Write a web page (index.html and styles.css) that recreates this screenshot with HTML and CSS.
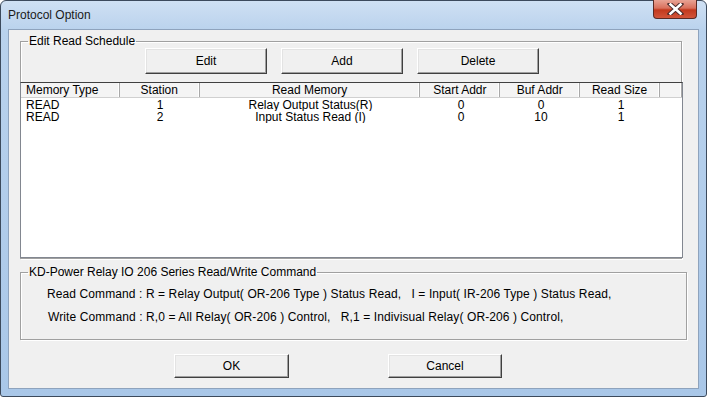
FILE: index.html
```html
<!DOCTYPE html>
<html lang="en">
<head>
    <meta charset="utf-8">
    <title>Protocol Option</title>
    <link rel="stylesheet" href="styles.css">
</head>
<body>
    <div class="window">
        <div class="titlebar">
            <span class="title">Protocol Option</span>
            <div class="close-btn">
                <svg width="17" height="12" viewBox="0 0 17 12">
                    <path d="M3 1 L14 11 M14 1 L3 11" stroke="#4a2a2a" stroke-width="4.5" stroke-linecap="square"/>
                    <path d="M3.5 1.5 L13.5 10.5 M13.5 1.5 L3.5 10.5" stroke="#ffffff" stroke-width="2.6" stroke-linecap="square"/>
                </svg>
            </div>
        </div>

        <div class="client">
            <fieldset class="group schedule">
                <legend>Edit Read Schedule</legend>
                <div class="action-row">
                    <button class="btn action-btn">Edit</button>
                    <button class="btn action-btn">Add</button>
                    <button class="btn action-btn">Delete</button>
                </div>
                <div class="list-view">
                    <div class="list-header">
                        <div class="col col-type left">Memory Type</div>
                        <div class="col col-station">Station</div>
                        <div class="col col-memory">Read Memory</div>
                        <div class="col col-start">Start Addr</div>
                        <div class="col col-buf">Buf Addr</div>
                        <div class="col col-size">Read Size</div>
                        <div class="col col-rest"></div>
                    </div>
                    <div class="list-row">
                        <div class="col col-type left">READ</div>
                        <div class="col col-station">1</div>
                        <div class="col col-memory">Relay Output Status(R)</div>
                        <div class="col col-start">0</div>
                        <div class="col col-buf">0</div>
                        <div class="col col-size">1</div>
                    </div>
                    <div class="list-row">
                        <div class="col col-type left">READ</div>
                        <div class="col col-station">2</div>
                        <div class="col col-memory">Input Status Read (I)</div>
                        <div class="col col-start">0</div>
                        <div class="col col-buf">10</div>
                        <div class="col col-size">1</div>
                    </div>
                </div>
            </fieldset>

            <fieldset class="group command">
                <legend>KD-Power Relay IO 206 Series Read/Write Command</legend>
                <p class="cmd-line">Read Command : R = Relay Output( OR-206 Type ) Status Read, &nbsp; I = Input( IR-206 Type ) Status Read,</p>
                <p class="cmd-line write">Write Command : R,0 = All Relay( OR-206 ) Control, &nbsp; R,1 = Indivisual Relay( OR-206 ) Control,</p>
            </fieldset>

            <div class="dialog-buttons">
                <button class="btn ok-btn">OK</button>
                <button class="btn cancel-btn">Cancel</button>
            </div>
        </div>
    </div>
</body>
</html>
```

FILE: styles.css
```css
:root {
    --frame-dark: #3c4a5c;
    --client-bg: #f0f0f0;
    --text: #000000;
    --group-line: #a0a0a0;
    --list-border: #828790;
    --font-ui: "Liberation Sans", Arial, sans-serif;
}

* {
    box-sizing: border-box;
}

body {
    margin: 0;
    width: 707px;
    height: 397px;
    overflow: hidden;
    background: #ffffff;
    font-family: var(--font-ui);
    font-size: 12px;
    color: var(--text);
}

.window {
    width: 707px;
    height: 397px;
    display: flex;
    flex-direction: column;
    border: 1px solid var(--frame-dark);
    border-radius: 6px 6px 3px 3px;
    background: linear-gradient(180deg, #cfe0f3 0%, #b9d2ed 30px, #a9c7e8 100%);
    padding: 0 7px 7px 7px;
}

.titlebar {
    height: 28px;
    display: flex;
    justify-content: space-between;
    align-items: flex-start;
    flex-shrink: 0;
}

.title {
    margin-top: 7px;
    font-size: 12px;
    color: #1a1a1a;
}

.close-btn {
    width: 44px;
    height: 19px;
    margin-top: -1px;
    margin-right: 2px;
    border: 1px solid #5a2a24;
    border-top: none;
    border-radius: 0 0 4px 4px;
    background: linear-gradient(180deg, #e8a394 0%, #d9705c 45%, #c2391d 55%, #d2543a 100%);
    display: flex;
    align-items: center;
    justify-content: center;
}

.client {
    flex: 1;
    background: var(--client-bg);
    border: 1px solid #8ea3bd;
    padding: 4px 0 0 11px;
    display: flex;
    flex-direction: column;
}

.group {
    margin: 0;
    padding: 0;
    border: 1px solid var(--group-line);
    box-shadow: inset 1px 1px 0 #ffffff, 1px 1px 0 #ffffff;
    min-width: 0;
}

.group legend {
    margin-left: 7px;
    padding: 0 1px;
    line-height: 14px;
    font-size: 12px;
}

.schedule {
    width: 662px;
    height: 225px;
}

.action-row {
    display: flex;
    gap: 14px;
    margin: 0 0 0 124px;
}

.btn {
    font-family: var(--font-ui);
    font-size: 12px;
    color: var(--text);
    background: #f0f0f0;
    border: 1px solid;
    border-color: #ffffff #404040 #404040 #ffffff;
    box-shadow: inset -1px -1px 0 #a0a0a0, inset 1px 1px 0 #e3e3e3;
    padding: 0;
}

.action-btn {
    width: 122px;
    height: 26px;
}

.list-view {
    width: 663px;
    height: 176px;
    margin: 8px 0 0 -1px;
    background: #ffffff;
    border: 1px solid var(--list-border);
    border-top-color: #404040;
}

.list-header {
    display: flex;
    height: 15px;
    background: #f4f4f4;
    border-bottom: 1px solid #d0d0d0;
}

.list-header .col {
    line-height: 14px;
    border-right: 1px solid #a9a9a9;
    box-shadow: inset -1px 0 0 #ffffff;
}

.list-row {
    display: flex;
    height: 12px;
    margin-top: 1px;
}

.list-row + .list-row {
    margin-top: 0;
}

.list-row .col {
    line-height: 12px;
}

.col {
    text-align: center;
    white-space: nowrap;
    overflow: hidden;
}

.col.left {
    text-align: left;
    padding-left: 5px;
}

.col-type { width: 99px; }
.col-station { width: 80px; }
.col-memory { width: 221px; }
.col-start { width: 80px; }
.col-buf { width: 80px; }
.col-size { width: 80px; }
.col-rest { width: 22px; }

.command {
    width: 667px;
    height: 75px;
    margin-top: 6px;
}

.cmd-line {
    margin: 7px 0 0 26px;
    line-height: 16px;
    letter-spacing: 0.1px;
}

.cmd-line.write {
    margin-top: 7px;
    margin-left: 27px;
}

.dialog-buttons {
    display: flex;
    gap: 99px;
    margin: 14px 0 0 154px;
}

.ok-btn {
    width: 115px;
    height: 24px;
}

.cancel-btn {
    width: 114px;
    height: 24px;
}
```
